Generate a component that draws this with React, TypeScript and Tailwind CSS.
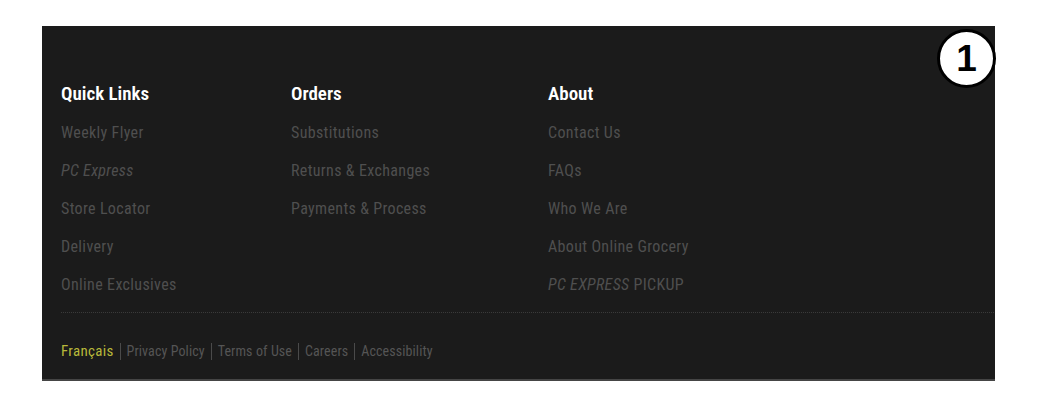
const font = "font-['Roboto_Condensed','DejaVu_Sans_Condensed',sans-serif]";

function Column({ title, items, width }: { title: string; items: React.ReactNode[]; width: string }) {
  return (
    <div className={`flex flex-col ${width}`}>
      <h3 className="text-[19px] font-semibold leading-[24px] text-white mb-[8px]">{title}</h3>
      <ul className="flex flex-col">
        {items.map((it, i) => (
          <li key={i} className="h-[38px] leading-[38px] text-[16px] tracking-[0.35px] text-[#4f4f4f]">
            {it}
          </li>
        ))}
      </ul>
    </div>
  );
}

export default function App() {
  const bottom = ["Privacy Policy", "Terms of Use", "Careers", "Accessibility"];
  return (
    <div className={`min-h-[414px] bg-white pt-[26px] pl-[42px] ${font}`}>
      <footer className="relative w-[953px] h-[355px] bg-[#1b1b1b] border-b-2 border-[#454545] pl-[19px] pr-[1px] pt-[56px] flex flex-col">
        <div className="flex">
          <Column
            width="w-[230px]"
            title="Quick Links"
            items={[
              "Weekly Flyer",
              <span className="italic">PC Express</span>,
              "Store Locator",
              "Delivery",
              "Online Exclusives",
            ]}
          />
          <Column
            width="w-[257px]"
            title="Orders"
            items={["Substitutions", "Returns & Exchanges", "Payments & Process"]}
          />
          <Column
            width="w-[300px]"
            title="About"
            items={[
              "Contact Us",
              "FAQs",
              "Who We Are",
              "About Online Grocery",
              <span>
                <span className="italic">PC EXPRESS</span> PICKUP
              </span>,
            ]}
          />
        </div>
        <div className="mt-[8px] border-t border-dotted border-[#3a3a3a]" />
        <div className="mt-[28px] flex items-center h-[20px] text-[14px] leading-[20px]">
          <span className="text-[#b8b83a] text-[15px] tracking-[0.3px]">Français</span>
          {bottom.map((b) => (
            <span key={b} className="flex items-center">
              <span className="mx-[6px] w-px h-[17px] bg-[#4a4a4a]" />
              <span className="text-[#555555] tracking-[0.1px]">{b}</span>
            </span>
          ))}
        </div>
        <div className="absolute right-[-1px] top-[3px] w-[59px] h-[59px] rounded-full bg-white border-[3px] border-black flex items-center justify-center">
          <span className="font-['Liberation_Sans',Arial,sans-serif] font-bold text-[37px] leading-none text-black">1</span>
        </div>
      </footer>
    </div>
  );
}
